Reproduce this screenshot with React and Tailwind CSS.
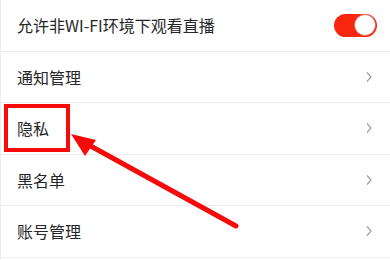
import React from 'react';

const rows = ['通知管理', '隐私', '黑名单', '账号管理'];

const Chevron = () => (
  <svg width="8" height="12" viewBox="0 0 8 12" className="shrink-0">
    <path d="M2 1.5 L6 6 L2 10.5" fill="none" stroke="#a0a0a0" strokeWidth="1.2" />
  </svg>
);

const App = () => {
  return (
    <div
      className="relative w-[390px] h-[260px] overflow-hidden bg-white border-l border-[#ececec]"
      style={{ fontFamily: '"Noto Sans CJK SC", "Noto Sans", sans-serif' }}
    >
      <div className="flex items-center justify-between h-[51.5px] pl-[16px] pr-[13px] border-b border-[#ececec]">
        <span className="text-[16px] text-[#262626]">允许非WI-FI环境下观看直播</span>
        {/* toggle */}
        <div className="flex items-center justify-end w-[43px] h-[23px] rounded-full bg-[#f8260c] p-px">
          <div className="w-[22px] h-[22px] rounded-full bg-white border border-[#d9705f]" />
        </div>
      </div>

      {rows.map((label) => (
        <div
          key={label}
          className="flex items-center justify-between h-[51.5px] pl-[16px] pr-[17px] border-b border-[#ececec]"
        >
          <span className="text-[16px] text-[#262626]">{label}</span>
          <Chevron />
        </div>
      ))}

      {/* highlight box */}
      <div className="absolute left-[3px] top-[104px] w-[66px] h-[48px] border-[4px] border-[#f70a0a]" />

      {/* arrow */}
      <svg className="absolute left-0 top-0" width="390" height="260" viewBox="0 0 390 260">
        <line x1="235" y1="226" x2="86" y2="144" stroke="#f70a0a" strokeWidth="5" strokeLinecap="round" />
        <polygon points="70,134 95,140 84,156" fill="#f70a0a" />
      </svg>
    </div>
  );
};

export default App;
